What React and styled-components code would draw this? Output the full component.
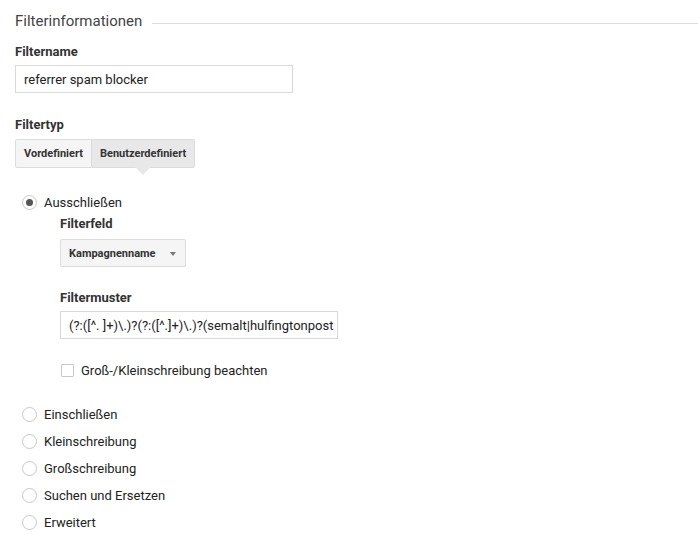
import React from "react";
import styled, { createGlobalStyle } from "styled-components";

const GlobalStyle = createGlobalStyle`
  body {
    margin: 0;
    background: #fff;
    font-family: Roboto, "Liberation Sans", Arial, sans-serif;
    color: #222;
  }
`;

const Page = styled.div`
  width: 698px;
  height: 544px;
  padding: 10px 0 0 15px;
  box-sizing: border-box;
  overflow: hidden;
`;

const Heading = styled.div`
  display: flex;
  align-items: center;
  gap: 10px;
  font-size: 15px;
  color: #444;
  height: 22px;
  span {
    white-space: nowrap;
  }
  &::after {
    content: "";
    flex: 1;
    height: 1px;
    background: #ddd;
    margin-top: 4px;
  }
`;

const Label = styled.div`
  font-size: 13px;
  font-weight: 700;
  color: #333;
  margin-top: ${({ $top }) => $top || 0}px;
  line-height: 16px;
`;

const TextInput = styled.div`
  box-sizing: border-box;
  width: ${({ $w }) => $w}px;
  height: 28px;
  margin-top: ${({ $top }) => $top || 0}px;
  border: 1px solid #d9d9d9;
  padding: 0 8px;
  font-size: 13px;
  color: #222;
  display: flex;
  align-items: center;
  white-space: nowrap;
  overflow: hidden;
`;

const Toggle = styled.div`
  display: flex;
  margin-top: 6px;
`;

const ToggleButton = styled.div`
  position: relative;
  height: 29px;
  box-sizing: border-box;
  padding: 0 8px;
  display: flex;
  align-items: center;
  font-size: 11px;
  font-weight: 700;
  color: #333;
  border: 1px solid #dcdcdc;
  border-left-width: ${({ $first }) => ($first ? 1 : 0)}px;
  background: ${({ $active }) => ($active ? "#e8e8e8" : "#f5f5f5")};
  border-radius: ${({ $first }) => ($first ? "2px 0 0 2px" : "0 2px 2px 0")};

  ${({ $active }) =>
    $active &&
    `
    &::after {
      content: "";
      position: absolute;
      left: 50%;
      top: 100%;
      margin-left: -8px;
      border-left: 8px solid transparent;
      border-right: 8px solid transparent;
      border-top: 8px solid #e8e8e8;
    }
  `}
`;

const Options = styled.div`
  display: flex;
  flex-direction: column;
  margin: 21px 0 0 7px;
`;

const RadioRow = styled.div`
  display: flex;
  align-items: center;
  gap: 7px;
  height: 27px;
  font-size: 13px;
  color: #222;
`;

const RadioCircle = styled.span`
  width: 15px;
  height: 15px;
  box-sizing: border-box;
  border-radius: 50%;
  border: 1px solid #c8c8c8;
  background: #fff;
  display: flex;
  align-items: center;
  justify-content: center;
  &::after {
    content: "";
    display: ${({ $checked }) => ($checked ? "block" : "none")};
    width: 7px;
    height: 7px;
    border-radius: 50%;
    background: #555;
  }
`;

const Nested = styled.div`
  padding-left: 38px;
  margin-top: 0;
  margin-bottom: 23px;
`;

const Select = styled.div`
  display: inline-flex;
  align-items: center;
  gap: 14px;
  height: 28px;
  box-sizing: border-box;
  margin-top: 7px;
  padding: 0 9px 0 8px;
  border: 1px solid #dcdcdc;
  border-radius: 2px;
  background: #f5f5f5;
  font-size: 11px;
  font-weight: 700;
  color: #333;
  &::after {
    content: "";
    border-left: 3px solid transparent;
    border-right: 3px solid transparent;
    border-top: 4px solid #777;
    margin-top: 2px;
  }
`;

const CheckRow = styled.div`
  display: flex;
  align-items: center;
  gap: 7px;
  margin-top: 24px;
  padding-left: 1px;
  font-size: 13px;
  color: #222;
`;

const CheckBox = styled.span`
  width: 13px;
  height: 13px;
  box-sizing: border-box;
  border: 1px solid #c8c8c8;
  border-radius: 1px;
`;

const others = ["Einschließen", "Kleinschreibung", "Großschreibung", "Suchen und Ersetzen", "Erweitert"];

export default function App() {
  return (
    <>
      <GlobalStyle />
      <Page>
        <Heading>
          <span>Filterinformationen</span>
        </Heading>
        <Label $top={12}>Filtername</Label>
        <TextInput $w={278} $top={5}>referrer spam blocker</TextInput>

        <Label $top={24}>Filtertyp</Label>
        <Toggle>
          <ToggleButton $first>Vordefiniert</ToggleButton>
          <ToggleButton $active>Benutzerdefiniert</ToggleButton>
        </Toggle>

        <Options>
          <RadioRow>
            <RadioCircle $checked />
            Ausschließen
          </RadioRow>
          <Nested>
            <Label>Filterfeld</Label>
            <Select>Kampagnenname</Select>
            <Label $top={23}>Filtermuster</Label>
            <TextInput $w={278} $top={5}>
              (?:([^. ]+)\.)?(?:([^.]+)\.)?(semalt|hulfingtonpost
            </TextInput>
            <CheckRow>
              <CheckBox />
              Groß-/Kleinschreibung beachten
            </CheckRow>
          </Nested>
          {others.map((o) => (
            <RadioRow key={o}>
              <RadioCircle />
              {o}
            </RadioRow>
          ))}
        </Options>
      </Page>
    </>
  );
}
